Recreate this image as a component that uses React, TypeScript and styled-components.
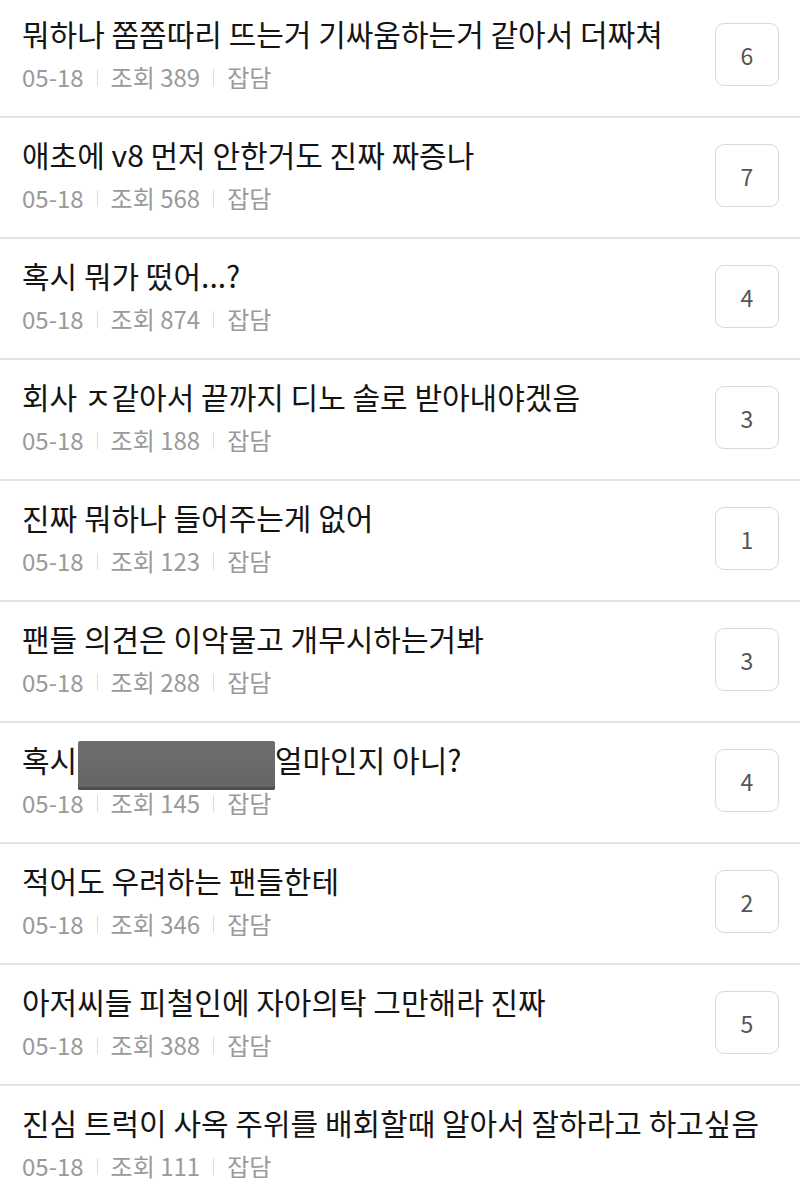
import styled, { createGlobalStyle } from "styled-components"

const GlobalStyle = createGlobalStyle`
    html, body {
        margin: 0;
        padding: 0;
        background: #fff;
    }
    body {
        font-family: "Noto Sans CJK KR", "Noto Sans", sans-serif;
        overflow: hidden;
    }
`

const List = styled.ul`
    list-style: none;
    margin: -3px 0 0;
    padding: 0;
`

const Row = styled.li`
    display: flex;
    align-items: center;
    height: 111px;
    padding: 0 21px 8px 22px;
    border-bottom: 2px solid #e3e3e3;
`

const Body = styled.div`
    flex: 1;
    min-width: 0;
    display: flex;
    flex-direction: column;
`

const Title = styled.div`
    font-size: 30px;
    line-height: 40px;
    color: #141414;
    white-space: nowrap;
`

const Hidden = styled.span`
    display: inline-block;
    position: relative;
    width: 197px;
    height: 40px;
    margin-left: -6px;
    vertical-align: top;
    &::after {
        content: "";
        position: absolute;
        left: 0;
        right: 0;
        top: 2px;
        height: 49px;
        border-radius: 2px;
        background: linear-gradient(#6e6e6e, #656565);
        box-shadow: inset 0 -3px 0 #4d4d57;
    }
`

const Meta = styled.div`
    display: flex;
    align-items: center;
    margin-top: 9px;
    font-size: 24px;
    line-height: 30px;
    color: #9a9a9a;
`

const Sep = styled.span`
    width: 1px;
    height: 17px;
    background: #dcdcdc;
    margin: 0 13px;
`

const Count = styled.div`
    flex: none;
    width: 62px;
    height: 61px;
    margin-top: 4px;
    border: 1.5px solid #d9d9d9;
    border-radius: 9px;
    display: flex;
    align-items: center;
    justify-content: center;
    font-size: 23px;
    color: #555;
`

type Post = { title: string; views: number; count?: number; redacted?: [string, string] }

const posts: Post[] = [
    { title: "뭐하나 쫌쫌따리 뜨는거 기싸움하는거 같아서 더짜쳐", views: 389, count: 6 },
    { title: "애초에 v8 먼저 안한거도 진짜 짜증나", views: 568, count: 7 },
    { title: "혹시 뭐가 떴어...?", views: 874, count: 4 },
    { title: "회사 ㅈ같아서 끝까지 디노 솔로 받아내야겠음", views: 188, count: 3 },
    { title: "진짜 뭐하나 들어주는게 없어", views: 123, count: 1 },
    { title: "팬들 의견은 이악물고 개무시하는거봐", views: 288, count: 3 },
    { title: "", views: 145, count: 4, redacted: ["혹시 ", "얼마인지 아니?"] },
    { title: "적어도 우려하는 팬들한테", views: 346, count: 2 },
    { title: "아저씨들 피철인에 자아의탁 그만해라 진짜", views: 388, count: 5 },
    { title: "진심 트럭이 사옥 주위를 배회할때 알아서 잘하라고 하고싶음", views: 111 },
]

const App = () => (
    <>
        <GlobalStyle />
        <List>
            {posts.map((p, i) => (
                <Row key={i}>
                    <Body>
                        <Title>
                            {p.redacted ? <>{p.redacted[0]}<Hidden />{p.redacted[1]}</> : p.title}
                        </Title>
                        <Meta>
                            05-18<Sep />조회 {p.views}<Sep />잡담
                        </Meta>
                    </Body>
                    {p.count !== undefined && <Count>{p.count}</Count>}
                </Row>
            ))}
        </List>
    </>
)

export default App
